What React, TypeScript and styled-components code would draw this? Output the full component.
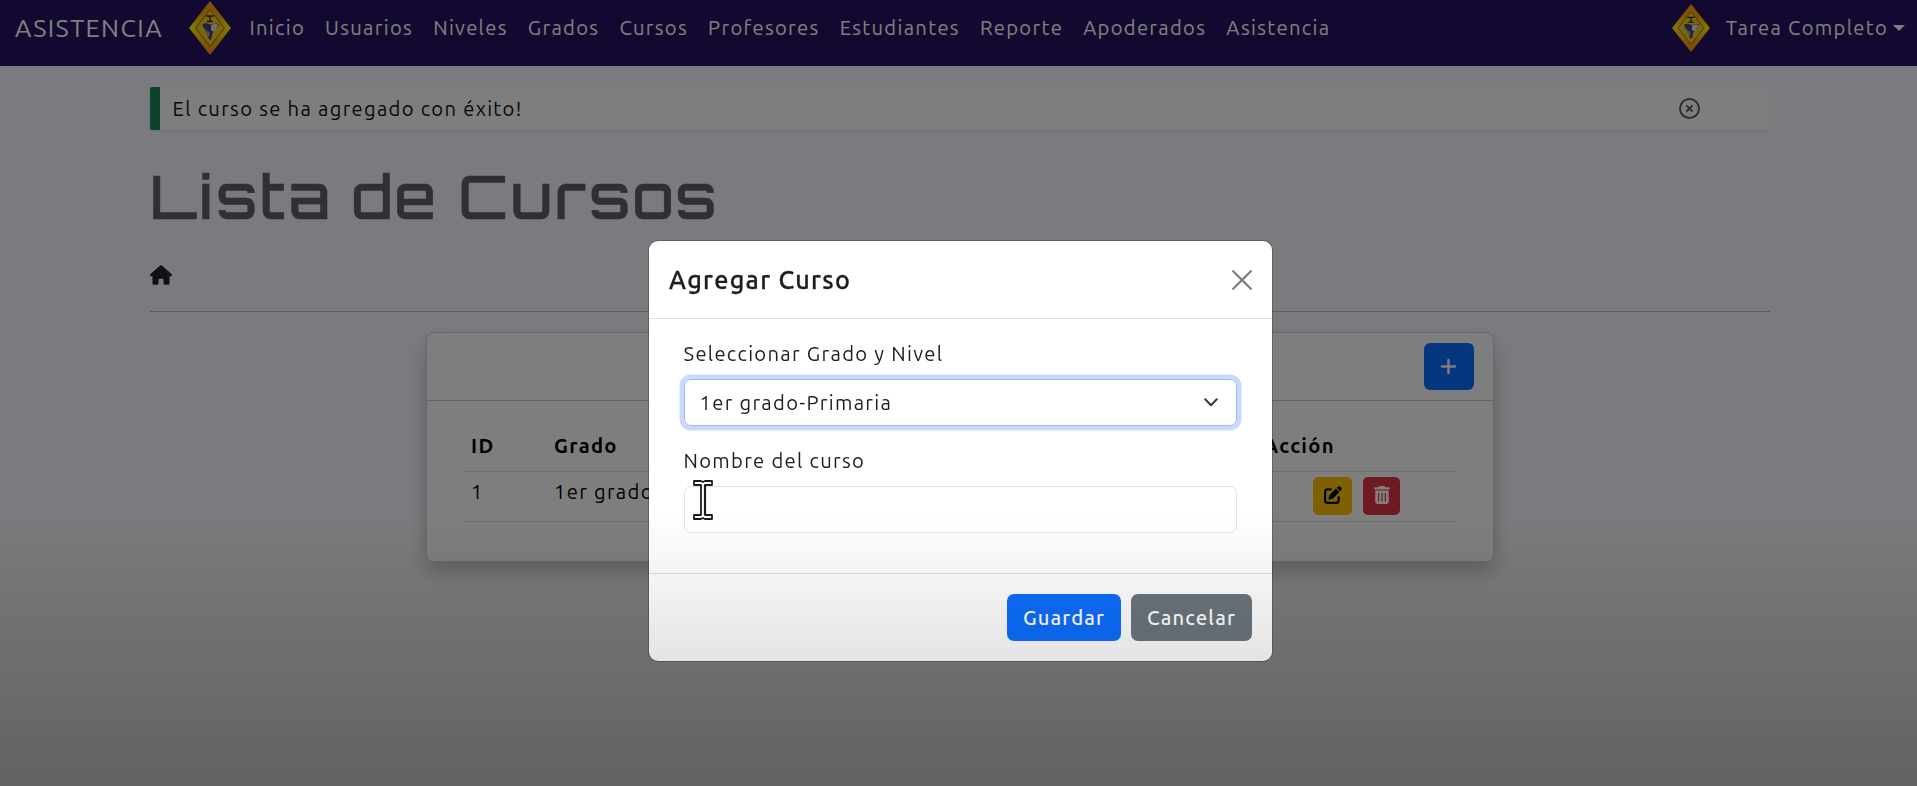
import React from 'react';
import styled, { createGlobalStyle, css } from 'styled-components';
import { FaHouse, FaPenToSquare, FaPlus, FaRegCircleXmark, FaTrashCan } from 'react-icons/fa6';

const GlobalStyle = createGlobalStyle`
  * { box-sizing: border-box; }
  html, body { margin: 0; height: 786px; overflow: hidden; }
  body {
    font-family: Ubuntu, "Noto Sans", sans-serif;
    font-size: 20.2px;
    line-height: 28px;
    letter-spacing: 1.3px;
    color: #1b1e22;
    background: linear-gradient(#f7f5fd 522px, #f7f7f9 523px);
  }
`;

const Text = styled.span`
  white-space: nowrap;
`;

/* Navigation */
const Navbar = styled.nav`
  display: flex;
  align-items: center;
  height: 66px;
  padding: 0 12px 11px 15px;
  background: #261260;
  color: #fff;
`;
const Brand = styled.div`
  width: 174px;
  font-size: 25.2px;
  letter-spacing: 1.4px;
`;
const NavLinks = styled.div`
  display: flex;
  gap: 20.1px;
  margin-left: 18.5px;
  flex: 1;
`;
const NavLink = styled.a`
  white-space: nowrap;
`;
const UserMenu = styled.div`
  display: flex;
  align-items: center;
`;
const UserName = styled(Text)`
  margin: 0 5px 0 16px;
`;
const Caret = styled.span`
  border: 6px solid transparent;
  border-top-color: #fff;
  border-bottom: 0;
`;

/* Page */
const Container = styled.main`
  width: 1620px;
  margin: 21px 0 0 150px;
`;
const Alert = styled.div`
  display: flex;
  align-items: center;
  justify-content: space-between;
  height: 43px;
  margin-right: 1px;
  padding: 0 69px 0 12.5px;
  border-left: 10px solid #198754;
  border-radius: 2px;
  background: #fffcff;
  box-shadow: 0 1px 2px rgba(0, 0, 0, 0.12);
  color: #111;
`;
const AlertIcon = styled.span`
  display: flex;
  font-size: 21px;
  color: #5f5e62;
`;
const Title = styled.h1`
  margin: 30px 0 0;
  height: 72px;
  font: 500 60px/72px Orbitron, "DejaVu Sans", sans-serif;
  letter-spacing: 2.65px;
  color: #616064;
  -webkit-text-stroke: 0.5px #616064;
  white-space: nowrap;
`;
const Breadcrumb = styled.div`
  display: flex;
  align-items: center;
  height: 80px;
  padding-top: 6px;
  font-size: 22px;
  color: #24232a;
`;
const Divider = styled.hr`
  margin: -1px 0 0;
  border: 0;
  border-top: 1px solid #bbb9be;
`;
const Card = styled.section`
  width: 1068px;
  height: 230px;
  margin: 20px 0 0 276px;
  border: 1px solid #d2d0d5;
  border-radius: 8px;
  background: #fffcff;
  box-shadow: 0 10px 20px rgba(0, 0, 0, 0.22);
`;
const CardHeader = styled.header`
  display: flex;
  align-items: center;
  justify-content: flex-end;
  height: 68px;
  padding-right: 19px;
  border-bottom: 1px solid #c6c4c9;
`;
const AddButton = styled.button`
  display: flex;
  align-items: center;
  justify-content: center;
  width: 50px;
  height: 47px;
  padding: 0 2px 1px 0;
  border: 0;
  border-radius: 6px;
  background: #0d6efd;
  color: #fff;
  font-size: 19px;
`;
const Table = styled.div`
  margin: 25px 36px 0 36px;
  color: #000;
`;
const Row = styled.div<{ $head?: boolean }>`
  display: grid;
  grid-template-columns: 83px 710px 1fr;
  height: 49.5px;
  padding: 6px 0 0 8px;
  border-bottom: 1px solid #dddbe0;
  ${(p) =>
    p.$head &&
    css`
      height: 46px;
      font-weight: 700;
    `}
`;
const Actions = styled.div`
  display: flex;
  gap: 11px;
  margin: -1px 0 0 49px;
`;
const IconButton = styled.button<{ $danger?: boolean }>`
  display: flex;
  align-items: center;
  justify-content: center;
  width: ${(p) => (p.$danger ? 37 : 39)}px;
  height: 38px;
  padding: 0 0 2px;
  border: 0;
  border-radius: 5px;
  background: ${(p) => (p.$danger ? '#dc3545' : '#ffc107')};
  color: ${(p) => (p.$danger ? '#fff' : '#000')};
  font-size: 18px;
`;

/* Dialog */
const Backdrop = styled.div`
  position: fixed;
  inset: 0;
  padding: 241px 0 0 649px;
  background: rgba(0, 0, 0, 0.5);
`;
const BottomShade = styled.div`
  position: fixed;
  inset: 515px 0 0;
  background: linear-gradient(rgba(0, 0, 0, 0), rgba(0, 0, 0, 0.105) 146px, rgba(0, 0, 0, 0.2));
  pointer-events: none;
`;
const Dialog = styled.div`
  position: relative;
  width: 623px;
  height: 420px;
  border-radius: 9px;
  background: #fff;
  box-shadow: 0 0 0 1px rgba(0, 0, 0, 0.22);
`;
const DialogHeader = styled.header`
  display: flex;
  align-items: center;
  justify-content: space-between;
  height: 78px;
  padding: 0 20px;
  border-bottom: 1px solid #dee2e6;
`;
const DialogTitle = styled.h2`
  margin: 0;
  font-size: 25.2px;
  font-weight: 500;
  -webkit-text-stroke: 0.3px #1b1e22;
`;
const DialogBody = styled.div`
  display: flex;
  flex-direction: column;
  height: 255px;
  padding: 21px 35px 0 34.5px;
  border-bottom: 1px solid #dee2e6;
`;
const Select = styled.div`
  display: flex;
  align-items: center;
  justify-content: space-between;
  height: 47px;
  margin: 11px 0 21px;
  padding: 0 18px 0 15px;
  border: 1px solid #9dbdf8;
  border-radius: 7px;
  box-shadow: 0 0 0 4.5px #c9d9fe;
`;
const Input = styled.input`
  height: 47px;
  margin-top: 11px;
  border: 1px solid #e1e3e6;
  border-radius: 7px;
  background: transparent;
`;
const DialogFooter = styled.footer`
  display: flex;
  align-items: center;
  justify-content: flex-end;
  gap: 10px;
  height: 87px;
  padding: 0 20px;
`;
const Button = styled.button<{ $primary?: boolean }>`
  width: ${(p) => (p.$primary ? 114 : 121)}px;
  height: 47px;
  padding: 0;
  border: 0;
  border-radius: 7px;
  background: ${(p) => (p.$primary ? '#0d6efd' : '#6c757d')};
  color: #fff;
  font: inherit;
  font-weight: 500;
  letter-spacing: 1.1px;
`;
const Pointer = styled.svg`
  position: absolute;
  left: 43px;
  top: 238px;
`;

const Crest = ({ width, height }: { width: number; height: number }) => (
  <svg width={width} height={height} viewBox="0 0 42 54" preserveAspectRatio="none">
    <defs>
      <linearGradient id="crest" x1="0" y1="0" x2="0" y2="1">
        <stop offset="0" stopColor="#ff9c10" />
        <stop offset=".25" stopColor="#ffa80c" />
        <stop offset=".5" stopColor="#fff600" />
        <stop offset=".75" stopColor="#ffb010" />
        <stop offset="1" stopColor="#ff8c10" />
      </linearGradient>
    </defs>
    <path d="M21 0 42 27 21 54 0 27Z" fill="url(#crest)" />
    <path d="M21 8.5 35.5 27 21 45.5 6.5 27Z" fill="#f8cb18" stroke="#6b5c18" strokeWidth="0.9" />
    <path d="M17 15h8M21 15v6M18 20.5h6" stroke="#26352c" strokeWidth="1.4" fill="none" />
    <path d="M13.5 23c4-2 7 0 9 1 3-2 6-2 8 0l-4 4-3 4-1.5 7c-3-1-4-4-3-7-3-2-5.5-5-5.5-9Z" fill="#3c427e" />
    <path d="M22 25c2-3 6-2 8-1-2 1-3 4-4 6-2 1-3 0-4-1Z" fill="#e0ddee" />
    <path d="M14.500 25c1 3 3 5 6 6v6c-1-3-5-5-6-12Z" fill="#9a9cae" />
  </svg>
);

const links = [
  'Inicio',
  'Usuarios',
  'Niveles',
  'Grados',
  'Cursos',
  'Profesores',
  'Estudiantes',
  'Reporte',
  'Apoderados',
  'Asistencia',
];

export default function App() {
  return (
    <>
      <GlobalStyle />
      <Navbar>
        <Brand>ASISTENCIA</Brand>
        <Crest width={42} height={54} />
        <NavLinks>
          {links.map((label) => (
            <NavLink key={label}>{label}</NavLink>
          ))}
        </NavLinks>
        <UserMenu>
          <Crest width={38} height={48} />
          <UserName>Tarea Completo</UserName>
          <Caret />
        </UserMenu>
      </Navbar>
      <Container>
        <Alert>
          <Text>El curso se ha agregado con éxito!</Text>
          <AlertIcon>
            <FaRegCircleXmark />
          </AlertIcon>
        </Alert>
        <Title>Lista de Cursos</Title>
        <Breadcrumb>
          <FaHouse />
        </Breadcrumb>
        <Divider />
        <Card>
          <CardHeader>
            <AddButton>
              <FaPlus />
            </AddButton>
          </CardHeader>
          <Table>
            <Row $head>
              <Text>ID</Text>
              <Text>Grado</Text>
              <Text>Acción</Text>
            </Row>
            <Row>
              <Text>1</Text>
              <Text>1er grado-Primaria</Text>
              <Actions>
                <IconButton>
                  <FaPenToSquare />
                </IconButton>
                <IconButton $danger>
                  <FaTrashCan />
                </IconButton>
              </Actions>
            </Row>
          </Table>
        </Card>
      </Container>
      <Backdrop>
        <Dialog>
          <DialogHeader>
            <DialogTitle>Agregar Curso</DialogTitle>
            <svg width="20" height="20" viewBox="0 0 20 20" stroke="#7c7c7c" strokeWidth="2.2" strokeLinecap="round">
              <path d="M1.2 1.2 18.8 18.8M18.8 1.2 1.2 18.8" />
            </svg>
          </DialogHeader>
          <DialogBody>
            <Text>Seleccionar Grado y Nivel</Text>
            <Select>
              <Text>1er grado-Primaria</Text>
              <svg width="14" height="9" viewBox="0 0 14 9" fill="none" stroke="#343a40" strokeWidth="2" strokeLinecap="round" strokeLinejoin="round">
                <path d="m1.2 1.2 5.8 6 5.8-6" />
              </svg>
            </Select>
            <Text>Nombre del curso</Text>
            <Input />
          </DialogBody>
          <DialogFooter>
            <Button $primary>Guardar</Button>
            <Button>Cancelar</Button>
          </DialogFooter>
          <Pointer width="22" height="42" viewBox="0 0 22 42">
            <path
              d="M2 2h7l2 1 2-1h7v4h-7v30h7v4h-7l-2-1-2 1H2v-4h7V6H2Z"
              fill="#fff"
              stroke="#1c1a20"
              strokeWidth="1.8"
              strokeLinejoin="round"
            />
            <path d="M13 6v30" stroke="#1c1a20" strokeWidth="2.2" />
          </Pointer>
        </Dialog>
      </Backdrop>
      <BottomShade />
    </>
  );
}
